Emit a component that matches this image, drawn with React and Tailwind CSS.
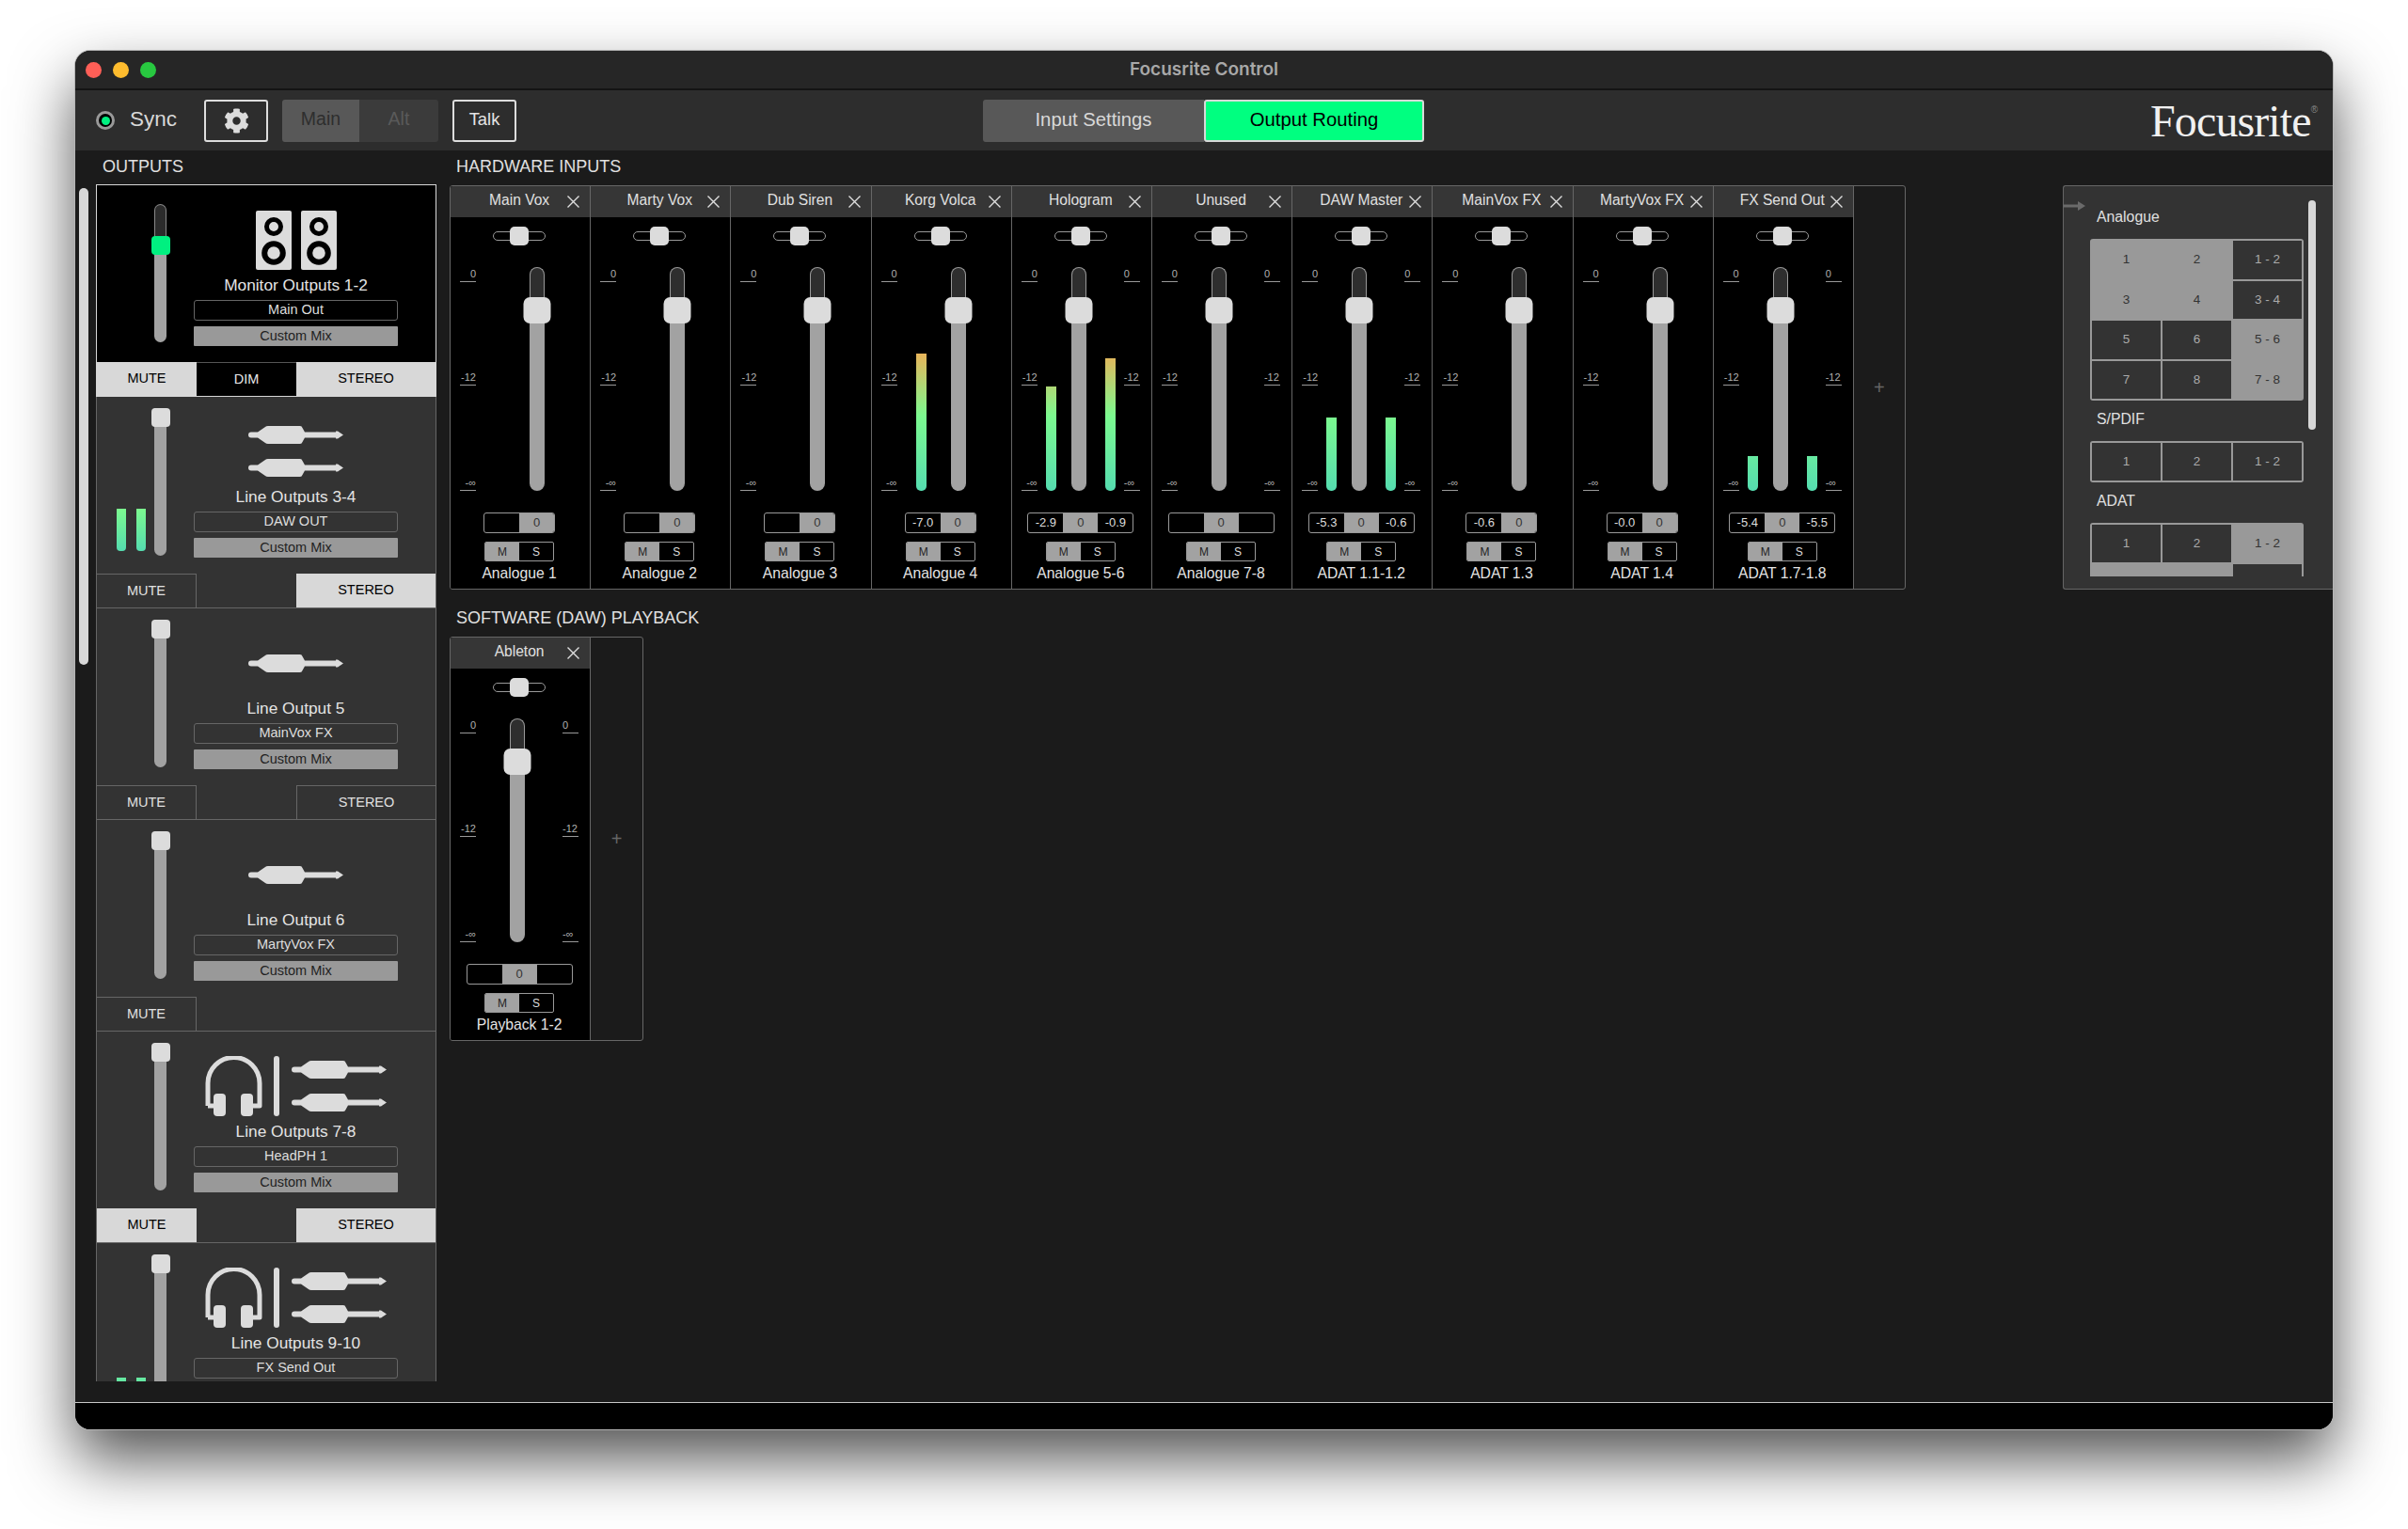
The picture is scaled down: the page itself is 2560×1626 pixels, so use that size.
import { FaCog } from 'react-icons/fa';
import clsx from 'clsx';

const outputs = [
    { name: 'Monitor Outputs 1-2', label: 'Main Out', icon: 'monitor', selected: true, mute: true, dim: true, stereo: 'on' },
    { name: 'Line Outputs 3-4', label: 'DAW OUT', icon: 'jacks', meter: 45, stereo: 'on' },
    { name: 'Line Output 5', label: 'MainVox FX', icon: 'jack', stereo: 'off' },
    { name: 'Line Output 6', label: 'MartyVox FX', icon: 'jack' },
    { name: 'Line Outputs 7-8', label: 'HeadPH 1', icon: 'phones', mute: true, stereo: 'on' },
    // scrolled partly out of the list, nothing below the label box is visible
    { name: 'Line Outputs 9-10', label: 'FX Send Out', icon: 'phones', meter: 21, partial: true },
];

const hardware = [
    { title: 'Main Vox', name: 'Analogue 1' },
    { title: 'Marty Vox', name: 'Analogue 2' },
    { title: 'Dub Siren', name: 'Analogue 3' },
    { title: 'Korg Volca', name: 'Analogue 4', meters: [146], values: ['-7.0'] },
    { title: 'Hologram', name: 'Analogue 5-6', stereo: true, meters: [111, 141], values: ['-2.9', '-0.9'] },
    { title: 'Unused', name: 'Analogue 7-8', stereo: true, meters: [0, 0], values: ['', ''] },
    { title: 'DAW Master', name: 'ADAT 1.1-1.2', stereo: true, meters: [78, 78], values: ['-5.3', '-0.6'] },
    { title: 'MainVox FX', name: 'ADAT 1.3', values: ['-0.6'] },
    { title: 'MartyVox FX', name: 'ADAT 1.4', values: ['-0.0'] },
    { title: 'FX Send Out', name: 'ADAT 1.7-1.8', stereo: true, meters: [37, 37], values: ['-5.4', '-5.5'] },
];

const routing = [
    {
        title: 'Analogue',
        cells: [
            ['1', true], ['2', true], ['1 - 2', false],
            ['3', true], ['4', true], ['3 - 4', false],
            ['5', false], ['6', false], ['5 - 6', true],
            ['7', false], ['8', false], ['7 - 8', true],
        ],
    },
    { title: 'S/PDIF', cells: [['1', false], ['2', false], ['1 - 2', false]] },
    {
        title: 'ADAT',
        cells: [
            ['1', false], ['2', false], ['1 - 2', true],
            ['', true], ['', true], ['', false],
        ],
    },
];

function JackIcon() {
    return (
        <svg width="101" height="19" viewBox="0 0 101 19" fill="#dcdcdc">
            <path d="M3 6.5H10L18 1Q19 0 21 0H55Q57 0 57.5 2L60 6.5H93V5.5H95L101 9.5L95 13.5H93V12.5H60L57.5 17Q57 19 55 19H21Q19 19 18 18L10 12.5H3A3 3 0 0 1 3 6.5Z" />
        </svg>
    );
}

function JackPair() {
    return (
        <div className="flex flex-col gap-[16px]">
            <JackIcon />
            <JackIcon />
        </div>
    );
}

function MonitorIcon() {
    const cabinet = (
        <svg width="38" height="63" viewBox="0 0 38 63">
            <rect width="38" height="63" rx="2" fill="#dcdcdc" />
            <circle cx="19" cy="17" r="7.5" fill="none" stroke="#000" strokeWidth="5" />
            <circle cx="19" cy="45" r="9.8" fill="none" stroke="#000" strokeWidth="6" />
        </svg>
    );
    return (
        <div className="flex gap-[10px]">
            {cabinet}
            {cabinet}
        </div>
    );
}

function PhonesIcon() {
    return (
        <div className="flex items-center">
            <svg width="61" height="64" viewBox="0 0 61 64" fill="none">
                <path d="M3 53V29A27.5 27.5 0 0 1 58 29V53H50M3 53H11" stroke="#dcdcdc" strokeWidth="5" strokeLinejoin="round" />
                <rect x="9" y="40" width="13" height="24" rx="4" fill="#dcdcdc" />
                <rect x="38" y="40" width="13" height="24" rx="4" fill="#dcdcdc" />
            </svg>
            <div className="ml-[12px] h-[64px] w-[6px] rounded-full bg-[#dcdcdc]" />
            <div className="ml-[13px]">
                <JackPair />
            </div>
        </div>
    );
}

function CloseIcon() {
    return (
        <svg width="13" height="13" viewBox="0 0 13 13" className="mr-[9px] justify-self-end">
            <path d="M0.5 0.5L12.5 12.5M12.5 0.5L0.5 12.5" stroke="#dedede" strokeWidth="1.4" />
        </svg>
    );
}

function OutputStrip({ strip }) {
    const { selected, meter } = strip;
    return (
        <div className={clsx('flex-none border-x border-b', selected ? 'border-[#d8d8d8] border-t bg-black' : 'border-[#666] bg-[#333]')}>
            <div className="flex h-[188px]">
                {/* meters and level fader */}
                <div className="flex w-[103px] flex-none pl-[21px]">
                    <div className="flex h-[164px] w-[31px] flex-none items-end gap-[11px]">
                        {meter && (
                            <>
                                <div className="w-[10px] rounded-b-[4px] bg-[linear-gradient(to_top,#55dcb0_0px,#7cf98f_45px)]" style={{ height: meter }} />
                                <div className="w-[10px] rounded-b-[4px] bg-[linear-gradient(to_top,#55dcb0_0px,#7cf98f_45px)]" style={{ height: meter }} />
                            </>
                        )}
                    </div>
                    <div className={clsx('relative ml-[9px] flex w-[13px] flex-none flex-col', selected ? 'mt-[20px] h-[147px]' : 'mt-[12px] h-[157px]')}>
                        {selected && <div className="h-[40px] rounded-t-full border-x border-t border-[#888] bg-[#2b2b2b]" />}
                        <div className="flex-1 rounded-b-full bg-[#a2a2a2]" />
                        <div className={clsx('absolute left-1/2 h-[20px] w-[20px] -translate-x-1/2 rounded-[4px]', selected ? 'top-[34px] bg-[#00f080]' : 'top-0 bg-[#dcdcdc]')} />
                    </div>
                </div>
                {/* outlet picture, name and source */}
                <div className="flex flex-1 flex-col items-center pr-[40px] pt-[20px]">
                    <div className="flex h-[76px] items-center justify-center">
                        {strip.icon === 'monitor' && <MonitorIcon />}
                        {strip.icon === 'jacks' && <JackPair />}
                        {strip.icon === 'jack' && <JackIcon />}
                        {strip.icon === 'phones' && <PhonesIcon />}
                    </div>
                    <div className="h-[20px] whitespace-nowrap text-[17.3px] leading-[20px] text-[#e4e4e4]">{strip.name}</div>
                    <div className="mt-[6px] flex h-[22px] w-[217px] flex-none items-center justify-center rounded-[3px] border-[1.5px] border-[#666] text-[14.5px] text-[#dedede]">
                        {strip.label}
                    </div>
                    {!strip.partial && (
                        <div className="mt-[6px] flex h-[21px] w-[217px] flex-none items-center justify-center rounded-[1px] bg-[#999] text-[14.5px] text-[#222]">
                            Custom Mix
                        </div>
                    )}
                </div>
            </div>
            {!strip.partial && (
                <div className="grid h-[36px] grid-cols-[106px_106px_1fr] text-[14.5px]">
                    <button className={clsx('flex items-center justify-center', strip.mute ? 'bg-[#d8d8d8] text-black' : 'border-r border-t border-[#666] text-[#e0e0e0]')}>MUTE</button>
                    {strip.dim ? <button className="flex items-center justify-center border-t border-[#555] bg-black text-[#e8e8e8]">DIM</button> : <div />}
                    {strip.stereo && (
                        <button className={clsx('flex items-center justify-center', strip.stereo === 'on' ? 'bg-[#d8d8d8] text-black' : 'border-l border-t border-[#666] text-[#e0e0e0]')}>STEREO</button>
                    )}
                </div>
            )}
        </div>
    );
}

function Scale({ right }) {
    return (
        <div className={clsx('w-[17px] flex-none self-stretch text-[11px] leading-[14px] text-[#b0b0b0]', right ? 'text-left' : 'text-right')}>
            <div className="h-[16px] border-b-[1.5px] border-[#999]">0</div>
            <div className="mt-[94px] h-[16px] border-b-[1.5px] border-[#999]">-12</div>
            <div className="mt-[96px] h-[16px] border-b-[1.5px] border-[#999]">-∞</div>
        </div>
    );
}

function Meter({ height }) {
    return <div className="w-[11px] flex-none rounded-b-[5px] bg-[linear-gradient(to_top,#55dcb0_0px,#7cf98f_80px,#e8b45a_146px)]" style={{ height }} />;
}

function Fader() {
    return (
        <div className="relative flex w-[16px] flex-none flex-col self-stretch">
            <div className="h-[40px] rounded-t-full border-x-[1.5px] border-t-[1.5px] border-[#999] bg-[#2e2e2e]" />
            <div className="flex-1 rounded-b-full bg-[#a2a2a2]" />
            <div className="absolute left-1/2 top-[32px] h-[28px] w-[29px] -translate-x-1/2 rounded-[7px] bg-[#dcdcdc]" />
        </div>
    );
}

function Channel({ channel }) {
    const { stereo, meters = [], values = [] } = channel;
    return (
        <div className="flex w-[149.2px] flex-none flex-col border-r border-[#666] bg-black">
            <div className="grid h-[33px] grid-cols-[1fr_auto_1fr] items-center bg-[#363636] pr-[2px]">
                <div />
                <div className="whitespace-nowrap pb-[4px] text-[15.6px] text-[#e0e0e0]">{channel.title}</div>
                <CloseIcon />
            </div>
            <div className="flex flex-1 flex-col items-center pr-[2px]">
                {/* pan */}
                <div className="mt-[10px] flex h-[20px] items-center">
                    <div className="relative h-[10px] w-[56px] rounded-full border-[1.5px] border-[#999]">
                        <div className="absolute left-1/2 top-1/2 h-[20px] w-[20px] -translate-x-1/2 -translate-y-1/2 rounded-[5px] bg-[#dcdcdc]" />
                    </div>
                </div>
                {/* scale, meters and fader */}
                <div className="mt-[23px] flex h-[238px] w-full items-end pl-[10px]">
                    <Scale />
                    {stereo ? (
                        <>
                            <div className="ml-[9px] flex w-[11px] flex-none items-end"><Meter height={meters[0]} /></div>
                            <div className="ml-[16px] flex self-stretch"><Fader /></div>
                            <div className="ml-[20px] flex w-[11px] flex-none items-end"><Meter height={meters[1]} /></div>
                            <div className="ml-[9px] flex self-stretch"><Scale right /></div>
                        </>
                    ) : (
                        <>
                            <div className="ml-[20px] flex w-[11px] flex-none items-end">{meters[0] && <Meter height={meters[0]} />}</div>
                            <div className="ml-[26px] flex self-stretch"><Fader /></div>
                        </>
                    )}
                </div>
                {/* values */}
                {stereo ? (
                    <div className="mt-[23px] grid h-[22px] w-[113px] grid-cols-3 overflow-hidden rounded-[3px] border-[1.5px] border-[#999] text-[13px] text-[#dedede]">
                        <div className="flex items-center justify-center">{values[0]}</div>
                        <div className="flex items-center justify-center bg-[#a2a2a2] text-[#333]">0</div>
                        <div className="flex items-center justify-center">{values[1]}</div>
                    </div>
                ) : (
                    <div className="mt-[23px] grid h-[22px] w-[76px] grid-cols-2 overflow-hidden rounded-[3px] border-[1.5px] border-[#999] text-[13px] text-[#dedede]">
                        <div className="flex items-center justify-center">{values[0]}</div>
                        <div className="flex items-center justify-center bg-[#a2a2a2] text-[#333]">0</div>
                    </div>
                )}
                <div className="mt-[9px] grid h-[21px] w-[74px] grid-cols-2 overflow-hidden rounded-[2px] border-[1.5px] border-[#999] text-[12px]">
                    <div className="flex items-center justify-center bg-[#a2a2a2] text-[#222]">M</div>
                    <div className="flex items-center justify-center text-[#dedede]">S</div>
                </div>
                <div className="flex h-[26px] items-center whitespace-nowrap text-[15.7px] text-[#e4e4e4]">{channel.name}</div>
            </div>
        </div>
    );
}

function AddColumn() {
    return <div className="flex flex-1 items-center justify-center text-[20px] font-light text-[#666]">+</div>;
}

function RoutingGrid({ cells }) {
    return (
        <div className="mt-[13px] grid w-[227px] auto-rows-[40.5px] grid-cols-3 gap-[2px] rounded-[3px] bg-[#999] p-[2px]">
            {cells.map(([text, on], i) => (
                <div key={i} className={clsx('flex items-center justify-center text-[13.5px]', on ? 'text-[#333]' : 'bg-[#333] text-[#aaa]')}>
                    {text}
                </div>
            ))}
        </div>
    );
}

function RoutingPanel() {
    return (
        <div className="relative ml-[167px] mt-[37px] h-[430px] w-[287px] flex-none rounded-l-[3px] border border-r-0 border-[#666] bg-[#333]">
            {/* arrow over the panel corner */}
            <svg width="23" height="10" viewBox="0 0 23 10" className="absolute left-0 top-[16px]">
                <path d="M0 3.5H15V0L23 5L15 10V6.5H0Z" fill="#6a6a6a" />
            </svg>
            <div className="absolute left-[260px] top-[15px] h-[244px] w-[8px] rounded-full bg-[#d8d8d8]" />
            <div className="h-[415px] overflow-hidden pl-[28px] pt-[23px]">
                {routing.map((group, i) => (
                    <div key={group.title} className={clsx(i > 0 && 'mt-[9.5px]')}>
                        <div className="flex h-[20px] items-center pl-[7px] text-[15.8px] text-[#e0e0e0]">{group.title}</div>
                        <RoutingGrid cells={group.cells} />
                    </div>
                ))}
            </div>
        </div>
    );
}

export default function App() {
    return (
        <div className="h-[1626px] w-[2560px] overflow-hidden bg-white pl-[80px] pt-[54px] font-['Liberation_Sans',Arial,sans-serif]">
            <div className="flex h-[1466px] w-[2400px] flex-col overflow-hidden rounded-[16px] bg-black shadow-[0_0_0_1px_#b5b5b5,0_32px_66px_rgba(0,0,0,0.68)]">
                {/* Title bar */}
                <div className="relative flex h-[42px] flex-none items-center border-b-2 border-[#141414] bg-[#262626] pl-[11px]">
                    <div className="flex gap-[12px]">
                        <div className="h-[17px] w-[17px] rounded-full bg-[#ff5f57]" />
                        <div className="h-[17px] w-[17px] rounded-full bg-[#febc2e]" />
                        <div className="h-[17px] w-[17px] rounded-full bg-[#28c840]" />
                    </div>
                    <div className="flex-1 pr-[86px] text-center font-['Inter',sans-serif] text-[19px] font-semibold text-[#a8a8a8]">Focusrite Control</div>
                </div>

                {/* Toolbar */}
                <div className="flex h-[64px] flex-none items-center bg-[#2d2d2d]">
                    <div className="flex w-[137px] flex-none items-center pl-[22px]">
                        <div className="flex h-[20px] w-[20px] items-center justify-center rounded-full border-[3px] border-[#999] bg-black">
                            <div className="h-[9px] w-[9px] rounded-full bg-[#00f080]" />
                        </div>
                        <span className="ml-[16px] pb-[2px] text-[22.5px] text-[#d8d8d8]">Sync</span>
                    </div>
                    <button className="flex h-[45px] w-[68px] flex-none items-center justify-center rounded-[3px] border-2 border-[#ddd] text-[#dcdcdc]">
                        <FaCog size={27} />
                    </button>
                    <div className="ml-[15px] flex h-[45px] flex-none text-[19.5px]">
                        <div className="flex w-[82px] items-center justify-center rounded-l-[3px] bg-[#585858] pb-[2px] text-[#2e2e2e]">Main</div>
                        <div className="flex w-[84px] items-center justify-center rounded-r-[3px] bg-[#3b3b3b] pb-[2px] text-[#5a5a5a]">Alt</div>
                    </div>
                    <button className="ml-[15px] flex h-[45px] w-[68px] flex-none items-center justify-center rounded-[3px] border-2 border-[#ddd] pb-[2px] text-[18.4px] text-[#e4e4e4]">Talk</button>
                    <div className="ml-[496px] flex h-[45px] flex-none text-[20.3px]">
                        <div className="flex w-[235px] items-center justify-center rounded-l-[3px] bg-[#585858] pb-[2px] text-[#d8d8d8]">Input Settings</div>
                        <div className="flex w-[234px] items-center justify-center rounded-[3px] border-2 border-[#d8d8d8] bg-[#00ff80] pb-[2px] text-black">Output Routing</div>
                    </div>
                    <div className="ml-auto flex items-start pr-[16px] pt-[1px]">
                        <span className="font-['Liberation_Serif',serif] text-[48px] leading-none tracking-[-0.9px] text-[#f0f0f0]">Focusrite</span>
                        <span className="mt-[7px] text-[10px] leading-none text-[#888]">®</span>
                    </div>
                </div>

                {/* Main area */}
                <div className="flex min-h-0 flex-1 overflow-hidden bg-[#1b1b1b]">
                    <div className="ml-[4px] mt-[40px] h-[507px] w-[10px] flex-none rounded-full bg-[#d8d8d8]" />

                    <div className="ml-[8px] w-[362px] flex-none">
                        <div className="mb-[2px] flex h-[34px] items-center pl-[7px] text-[18px] text-[#e0e0e0]">OUTPUTS</div>
                        <div className="flex h-[1273px] flex-col overflow-hidden">
                            {outputs.map((strip) => (
                                <OutputStrip key={strip.name} strip={strip} />
                            ))}
                        </div>
                    </div>

                    <div className="ml-[14px] w-[1548px] flex-none">
                        <div className="mb-[3px] flex h-[34px] items-center pl-[7px] text-[18px] text-[#e0e0e0]">HARDWARE INPUTS</div>
                        <div className="flex h-[430px] overflow-hidden rounded-[3px] border border-[#666]">
                            {hardware.map((channel) => (
                                <Channel key={channel.title} channel={channel} />
                            ))}
                            <AddColumn />
                        </div>
                        <div className="mb-[10px] mt-[20px] flex h-[20px] items-center pl-[7px] text-[18px] text-[#e0e0e0]">SOFTWARE (DAW) PLAYBACK</div>
                        <div className="flex h-[430px] w-[206px] overflow-hidden rounded-[3px] border border-[#666]">
                            <Channel channel={{ title: 'Ableton', name: 'Playback 1-2', stereo: true, meters: [0, 0], values: ['', ''] }} />
                            <AddColumn />
                        </div>
                    </div>

                    <RoutingPanel />
                </div>

                {/* Footer strip */}
                <div className="h-[29px] flex-none border-t-[1.5px] border-[#c8c8c8] bg-black" />
            </div>
        </div>
    );
}
